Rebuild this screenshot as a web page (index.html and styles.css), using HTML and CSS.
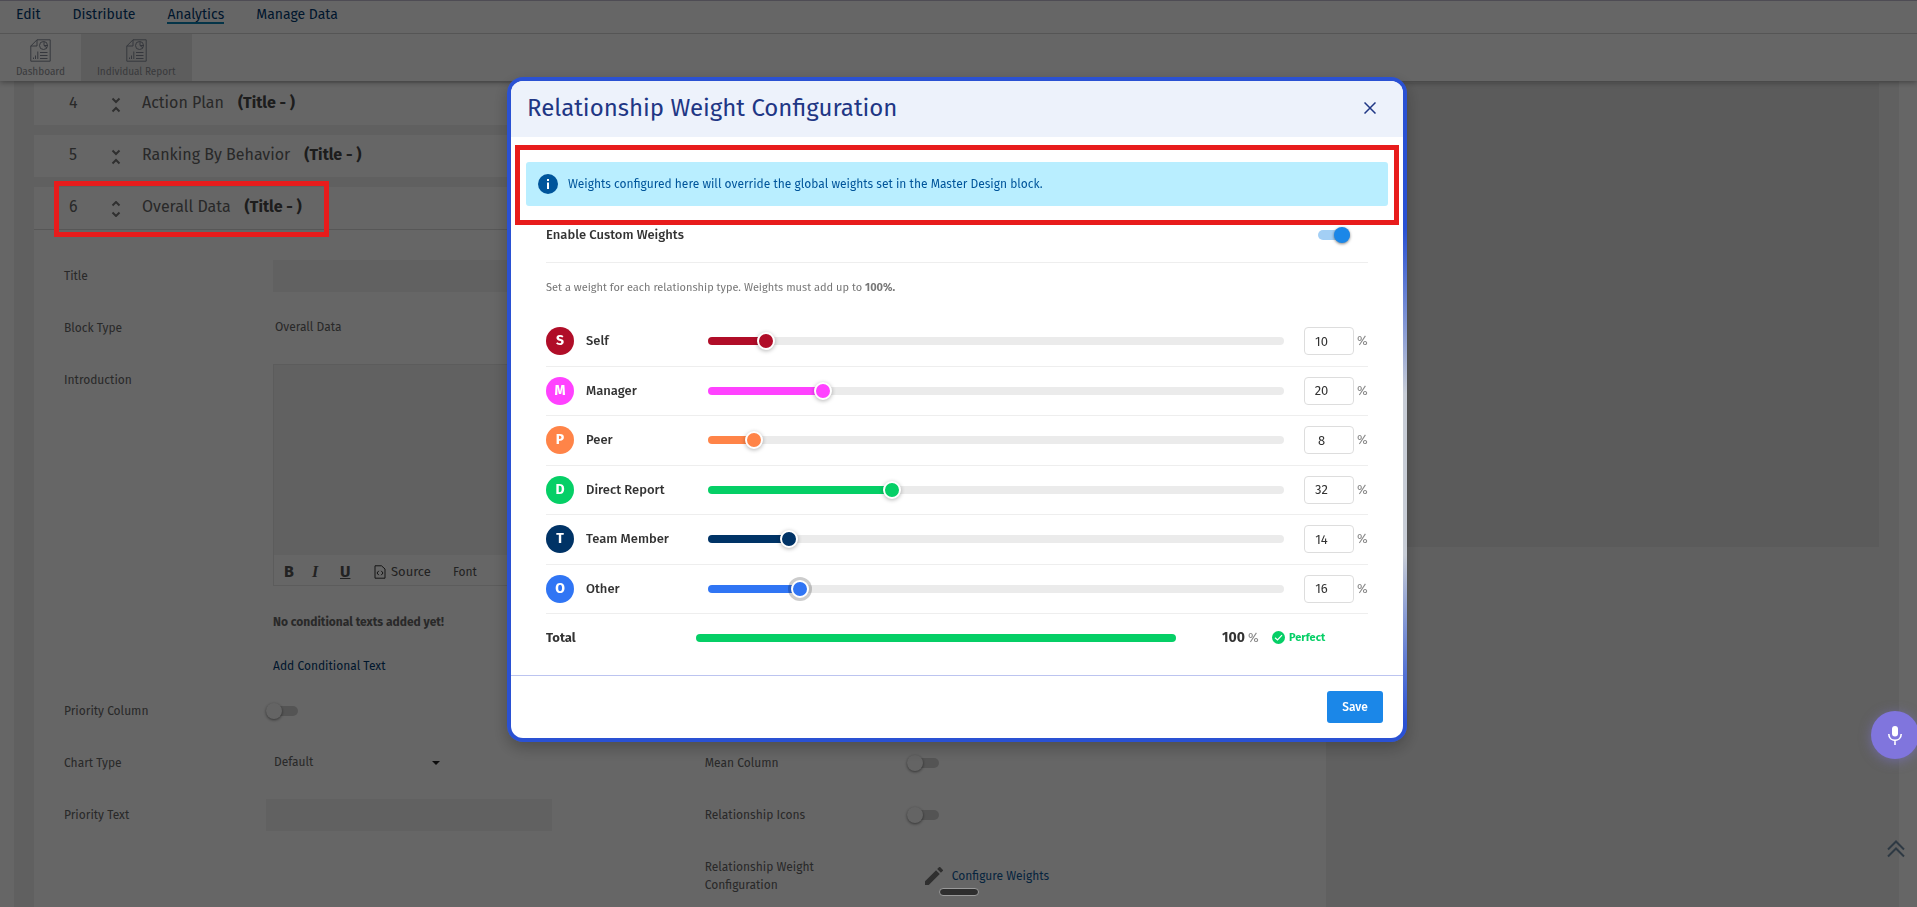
FILE: index.html
```html
<!DOCTYPE html>
<html lang="en">
<head>
  <meta charset="UTF-8" />
  <meta name="viewport" content="width=device-width, initial-scale=1.0">
  <title>Individual Report</title>
  <link rel="stylesheet" href="styles.css">
</head>
<body>
  <svg class="sprite" aria-hidden="true">
    <symbol id="icon-report" viewBox="0 0 21 23">
      <path d="M7 .8H20.2V22.2H.8V7Z M7 .8V7H.8" />
      <circle cx="13.5" cy="6.5" r="4" />
      <path d="M14 2.5V6.5H18 M14 6.5L17 9" />
      <path d="M10 13.5H17.5 M10 16.5H17.5 M10 19.5H17.5" />
      <path d="M3.5 20V18.5 M5.5 20V16.5 M7.8 20V12.5" />
    </symbol>
    <symbol id="icon-collapsed" viewBox="0 0 10 16">
      <path d="M1.5 1.5L5 5L8.500 1.5 M1.5 14.500L5 11L8.500 14.500" />
    </symbol>
    <symbol id="icon-expanded" viewBox="0 0 10 16">
      <path d="M1.5 4.500L5 1L8.500 4.500 M1.5 11.500L5 15L8.500 11.500" />
    </symbol>
  </svg>

  <div class="page">
    <header class="header">
      <nav class="nav">
        <a href="#">Edit</a>
        <a href="#">Distribute</a>
        <a href="#" class="active">Analytics</a>
        <a href="#">Manage Data</a>
      </nav>
      <div class="toolbar">
        <a href="#" class="tool">
          <svg class="tool-icon"><use href="#icon-report" /></svg>
          Dashboard
        </a>
        <a href="#" class="tool selected">
          <svg class="tool-icon"><use href="#icon-report" /></svg>
          Individual Report
        </a>
      </div>
    </header>

    <main class="workspace">
      <div class="report">
        <section class="block">
          <h2 class="block-head">
            <span class="block-number">4</span>
            <svg class="block-arrow"><use href="#icon-collapsed" /></svg>
            <span>Action Plan</span>
            <b>(Title - )</b>
          </h2>
        </section>
        <section class="block">
          <h2 class="block-head">
            <span class="block-number">5</span>
            <svg class="block-arrow"><use href="#icon-collapsed" /></svg>
            <span>Ranking By Behavior</span>
            <b>(Title - )</b>
          </h2>
        </section>
        <section class="block">
          <h2 class="block-head">
            <span class="block-number">6</span>
            <svg class="block-arrow"><use href="#icon-expanded" /></svg>
            <span>Overall Data</span>
            <b>(Title - )</b>
          </h2>
          <form class="form">
            <div class="field">
              <label for="title">Title</label>
              <input class="text-input" id="title" type="text">
            </div>
            <div class="field">
              <span class="label">Block Type</span>
              <span class="value">Overall Data</span>
            </div>
            <div class="field">
              <label for="intro">Introduction</label>
              <div class="intro">
                <div class="editor">
                  <textarea id="intro"></textarea>
                  <div class="editor-bar">
                    <button type="button" class="bold">B</button>
                    <button type="button" class="italic">I</button>
                    <button type="button" class="underline">U</button>
                    <button type="button" class="source">
                      <svg width="12" height="14" viewBox="0 0 12 14"><path d="M1 .8H7.500L11 4V13.200H1Z M4.800 5.800L3 8L4.800 10.200 M7.200 5.800L9 8L7.200 10.200" /></svg>
                      Source
                    </button>
                    <button type="button" class="font">Font</button>
                  </div>
                </div>
                <p class="empty">No conditional texts added yet!</p>
                <a href="#" class="add">Add Conditional Text</a>
              </div>
            </div>
            <div class="columns">
              <div class="column">
                <div class="field">
                  <label for="priority-column">Priority Column</label>
                  <input class="switch" id="priority-column" type="checkbox">
                </div>
                <div class="field">
                  <label for="chart-type">Chart Type</label>
                  <div class="select">
                    <select id="chart-type"><option>Default</option></select>
                  </div>
                </div>
                <div class="field">
                  <label for="priority-text">Priority Text</label>
                  <input class="text-input" id="priority-text" type="text">
                </div>
              </div>
              <div class="column column-end">
                <div class="field">
                  <label for="mean-column">Mean Column</label>
                  <input class="switch" id="mean-column" type="checkbox">
                </div>
                <div class="field">
                  <label for="relationship-icons">Relationship Icons</label>
                  <input class="switch" id="relationship-icons" type="checkbox">
                </div>
                <div class="field">
                  <span class="label">Relationship Weight Configuration</span>
                  <a href="#" class="configure">
                    <svg width="18" height="18" viewBox="3 3 18 18"><path d="M3 17.250V21h3.750L17.810 9.940l-3.750-3.750L3 17.250zM20.710 7.040a1 1 0 0 0 0-1.410l-2.340-2.340a1 1 0 0 0-1.410 0l-1.830 1.830 3.750 3.750 1.830-1.830z" /></svg>
                    Configure Weights
                  </a>
                </div>
              </div>
            </div>
          </form>
        </section>
      </div>
      <aside class="side"></aside>
    </main>

    <a href="#" class="to-top" aria-label="Back to top">
      <svg width="18" height="18" viewBox="0 0 18 18"><path d="M1 9.500L9 1.500L17 9.500 M1 16.500L9 8.500L17 16.500" /></svg>
    </a>
  </div>

  <div class="overlay">
    <div class="modal" role="dialog" aria-labelledby="modal-title">
      <div class="modal-head">
        <h1 id="modal-title">Relationship Weight Configuration</h1>
        <button type="button" class="close" aria-label="Close">
          <svg width="12" height="12" viewBox="0 0 12 12"><path d="M.5 .5L11.500 11.500M11.500 .5L.5 11.500" /></svg>
        </button>
      </div>
      <div class="modal-body">
        <div class="notice">
          <svg width="20" height="20" viewBox="0 0 20 20"><circle cx="10" cy="10" r="10" fill="#00559b" /><path d="M9 8.500h2V15H9zM9 5h2v2H9z" fill="#fff" /></svg>
          Weights configured here will override the global weights set in the Master Design block.
        </div>
        <div class="weights">
          <div class="enable">
            <label for="enable-weights">Enable Custom Weights</label>
            <input class="switch" id="enable-weights" type="checkbox" checked>
          </div>
          <p class="hint">Set a weight for each relationship type. Weights must add up to <b>100%.</b></p>
          <div class="rows" id="rows"></div>
          <div class="total">
            <span>Total</span>
            <div class="total-bar"></div>
            <output class="total-value" id="total"></output>
            <span class="percent">%</span>
            <span class="status">
              <svg width="13" height="13" viewBox="0 0 13 13"><circle cx="6.500" cy="6.500" r="6.500" fill="#05cf66" /><path d="M3 6.800L5.500 9L10 4.200" fill="none" stroke="#fff" stroke-width="1.200" /></svg>
              Perfect
            </span>
          </div>
        </div>
      </div>
      <div class="modal-foot">
        <button type="button" class="save">Save</button>
      </div>
      <div class="mark mark-notice"></div>
    </div>
  </div>

  <div class="mark mark-block"></div>
  <button type="button" class="mic" aria-label="Voice input">
    <svg width="14" height="19" viewBox="0 0 14 19"><rect x="4" y="0" width="6" height="10.500" rx="3" fill="#fff" /><path d="M.8 8C.8 16.500 13.200 16.500 13.200 8M7 14.500V19" fill="none" stroke="#fff" stroke-width="1.600" /></svg>
  </button>
  <div class="handle"></div>

  <script src="script.js"></script>
</body>
</html>
```
FILE: script.js
```js
const weights = [
  { name: "Self", color: "#b00d28", value: 10 },
  { name: "Manager", color: "#ff42ff", value: 20 },
  { name: "Peer", color: "#ff8448", value: 8 },
  { name: "Direct Report", color: "#05cf66", value: 32 },
  { name: "Team Member", color: "#003366", value: 14 },
  { name: "Other", color: "#3075f4", value: 16, focused: true }
];

const rows = document.getElementById("rows");

function updateTotal() {
  const sum = weights.reduce((total, w) => total + w.value, 0);
  document.getElementById("total").textContent = sum;
}

weights.forEach((w, i) => {
  const row = document.createElement("div");
  row.className = "row" + (w.focused ? " focused" : "");
  row.style.setProperty("--color", w.color);
  row.style.setProperty("--value", w.value + "%");
  row.innerHTML = `
    <span class="avatar">${w.name[0]}</span>
    <label for="weight${i}">${w.name}</label>
    <div class="slider"><input type="range" min="0" max="100" value="${w.value}" aria-label="${w.name}"></div>
    <input class="number" id="weight${i}" type="number" min="0" max="100" value="${w.value}">
    <span class="percent">%</span>`;
  rows.appendChild(row);

  // Keep the slider and the number box in step
  const inputs = row.querySelectorAll("input");
  inputs.forEach((input) => {
    input.addEventListener("input", () => {
      w.value = Number(input.value);
      inputs.forEach((other) => { other.value = w.value; });
      row.style.setProperty("--value", w.value + "%");
      updateTotal();
    });
  });
});

updateTotal();
```
FILE: styles.css
```css
* {
  box-sizing: border-box;
}
body {
  margin: 0;
  font-family: "Fira Sans", Roboto, sans-serif;
  font-size: 12px;
  line-height: 18px;
  color: #666;
  background: #fff;
}
h1, h2, p {
  margin: 0;
  font-weight: normal;
}
a {
  color: #003a70;
  text-decoration: none;
}
button, input, select, textarea {
  font: inherit;
  color: inherit;
  margin: 0;
}
button {
  border: none;
  background: none;
  padding: 0;
  cursor: pointer;
}
.sprite {
  display: none;
}
.page {
  height: 100vh;
  overflow: hidden;
}

/* Header */
.header {
  position: relative;
  background: #fff;
  border-top: 1px solid #c3bed2;
  box-shadow: 0 1px 6px rgba(0, 0, 0, 0.4);
}
.nav {
  display: flex;
  gap: 32px;
  padding: 5px 16px 9px;
  border-bottom: 1px solid #d5d5d5;
}
.nav a {
  font-size: 14px;
}
.nav .active {
  box-shadow: inset 0 -2px #0a82b4;
}
.toolbar {
  display: flex;
}
.tool {
  display: flex;
  flex-direction: column;
  align-items: center;
  gap: 1px;
  height: 47px;
  padding: 5px 16px 0;
  font-size: 10px;
  color: #8f9196;
}
.tool.selected {
  background: #e9e9e9;
}
.tool-icon {
  width: 21px;
  height: 23px;
  fill: none;
  stroke: #858b98;
}

/* Report blocks */
.workspace {
  display: flex;
  align-items: flex-start;
  margin: 0 18px 0 14px;
  padding: 2px 20px 0;
  background: #f0f0f0;
}
.report {
  flex: 7;
  display: flex;
  flex-direction: column;
  gap: 10px;
}
.side {
  flex: 3;
  height: 464px;
  background: #e3e3e3;
}
.block {
  background: #fff;
}
.block-head {
  display: flex;
  align-items: center;
  height: 42px;
  padding: 0 35px 2px;
  font-size: 16px;
}
.block-head b {
  margin-left: 14px;
  color: #4a4a4a;
}
.block-number {
  width: 42px;
}
.block-arrow {
  width: 10px;
  height: 16px;
  margin-top: 4px;
  margin-right: 21px;
  fill: none;
  stroke: #777;
  stroke-width: 2;
}
.form {
  padding: 30px 0 40px 30px;
  border-top: 1px solid #dadada;
}
.field {
  display: flex;
  min-height: 32px;
  margin-bottom: 20px;
}
.field label,
.label {
  flex: none;
  width: 209px;
  padding: 7px 60px 7px 0;
}
.value {
  padding: 6px 2px;
}
.text-input {
  flex: 1;
  height: 32px;
  border: none;
  background: #f3f3f3;
}
.intro {
  flex: 1;
}
.editor {
  border: 1px solid #e6e6e6;
}
.editor textarea {
  display: block;
  width: 100%;
  height: 190px;
  border: none;
  resize: none;
  background: #f3f3f3;
}
.editor-bar {
  display: flex;
  align-items: center;
  height: 30px;
  padding: 4px 10px 0;
  color: #555;
}
.editor-bar button {
  width: 28px;
  text-align: left;
}
.editor-bar .bold,
.editor-bar .underline {
  font-size: 16px;
  font-weight: bold;
}
.editor-bar .italic {
  font: italic bold 16px "Liberation Serif", serif;
}
.editor-bar .underline {
  width: 34px;
  text-decoration: underline;
}
.editor-bar .source {
  display: flex;
  align-items: center;
  gap: 5px;
  width: 79px;
  font-size: 13px;
}
.source svg {
  fill: none;
  stroke: #333;
}
.empty {
  margin-top: 27px;
  font-weight: bold;
}
.add {
  display: block;
  margin-top: 26px;
}
.columns {
  display: grid;
  grid-template-columns: 1fr 1fr;
  gap: 20px;
}
.columns label,
.columns .label {
  width: 202px;
}
.columns .text-input {
  flex: none;
  width: 286px;
}
.column-end {
  padding-top: 52px;
}
.select {
  position: relative;
  width: 178px;
}
.select select {
  width: 100%;
  height: 30px;
  padding: 0 8px;
  border: none;
  appearance: none;
  background: none;
}
.select::after {
  content: "";
  position: absolute;
  right: 4px;
  top: 14px;
  border: 4px solid transparent;
  border-top-color: #222;
}
.configure {
  display: flex;
  align-items: center;
  gap: 9px;
  margin-left: 18px;
  color: #0f5a9c;
}
.configure svg {
  fill: #777;
}
.to-top {
  position: fixed;
  right: 12px;
  bottom: 44px;
}
.to-top svg {
  fill: none;
  stroke: #7390a8;
  stroke-width: 2;
}

/* Switch */
.switch {
  appearance: none;
  flex: none;
  display: flex;
  align-items: center;
  align-self: center;
  width: 32px;
  height: 10px;
  border-radius: 5px;
  background: #d3d3d3;
}
.switch::before {
  content: "";
  width: 16px;
  height: 16px;
  border-radius: 50%;
  background: #fafafa;
  box-shadow: 0 1px 3px rgba(0, 0, 0, 0.5);
}
.switch:checked {
  justify-content: flex-end;
  background: #a3cff5;
}
.switch:checked::before {
  background: #1b87e8;
}

/* Modal */
.overlay {
  position: fixed;
  inset: 0;
  display: flex;
  align-items: flex-start;
  justify-content: center;
  padding: 77px 3px 0 0;
  background: rgba(0, 0, 0, 0.6);
}
.modal {
  position: relative;
  width: 900px;
  max-width: 100%;
  border: 4px solid transparent;
  border-radius: 16px;
  background:
    linear-gradient(#fff, #fff) padding-box,
    conic-gradient(#2a51d3 68deg, #c8cdd6 88deg, #c8cdd6 108deg, #2a51d3 125deg) border-box;
  box-shadow: 0 6px 16px rgba(0, 0, 0, 0.25);
  color: #333;
}
.modal-head {
  display: flex;
  align-items: center;
  justify-content: space-between;
  height: 56px;
  padding: 0 27px 2px 16px;
  border-radius: 12px 12px 0 0;
  background: #edf2fb;
  color: #1f3785;
}
.modal-head h1 {
  font-size: 24px;
  line-height: 30px;
}
.close {
  display: flex;
}
.close svg {
  fill: none;
  stroke: #1f3785;
  stroke-width: 1.5;
}
.modal-body {
  padding: 25px 15px 14px;
}
.notice {
  display: flex;
  align-items: center;
  gap: 10px;
  height: 44px;
  padding: 0 12px;
  border-radius: 3px;
  background: #b9eeff;
  color: #00559b;
}
.weights {
  padding: 0 20px;
  font-size: 13px;
}
.enable {
  display: flex;
  align-items: center;
  justify-content: space-between;
  height: 57px;
  padding: 2px 18px 0 0;
  border-bottom: 1px solid #eee;
  font-weight: 500;
}
.hint {
  padding: 16px 0 20px;
  font-size: 11px;
  color: #777;
}
.rows {
  display: grid;
  grid-auto-rows: 1fr;
  height: 297px;
}
.row {
  display: flex;
  align-items: center;
  border-bottom: 1px solid #eee;
}
.row label {
  width: 134px;
  padding-left: 12px;
  font-weight: 500;
}
.avatar {
  width: 28px;
  border-radius: 50%;
  background: var(--color);
  color: #fff;
  font-size: 14px;
  font-weight: bold;
  line-height: 28px;
  text-align: center;
}
.slider {
  flex: 1;
  display: flex;
  align-items: center;
  height: 8px;
  margin-right: 20px;
  border-radius: 4px;
  background: linear-gradient(to right, var(--color) var(--value), #ebebeb var(--value));
}
.slider input {
  appearance: none;
  flex: 1;
  min-width: 0;
  height: 18px;
  margin: 0 -9px;
  background: none;
}
.slider input::-webkit-slider-thumb {
  appearance: none;
  width: 18px;
  height: 18px;
  border: 2px solid #fff;
  border-radius: 50%;
  background: var(--color);
  box-shadow: 0 1px 4px rgba(0, 0, 0, 0.3);
}
.focused input::-webkit-slider-thumb {
  box-shadow: 0 0 0 3px rgba(0, 0, 0, 0.2);
}
.number {
  width: 50px;
  height: 28px;
  padding: 0;
  border: 1px solid #ddd;
  border-radius: 4px;
  background: #fff;
  text-align: center;
}
.percent {
  width: 14px;
  padding-left: 3px;
  color: #888;
}
.total {
  display: flex;
  align-items: center;
  height: 47px;
  font-weight: bold;
}
.total > :first-child {
  width: 150px;
}
.total-bar {
  flex: 1;
  height: 8px;
  border-radius: 4px;
  background: #05cf66;
}
.total-value {
  width: 69px;
  font-size: 14px;
  text-align: right;
}
.total .percent {
  font-weight: normal;
}
.status {
  display: flex;
  align-items: center;
  gap: 4px;
  width: 109px;
  padding-left: 13px;
  font-size: 11px;
  color: #05cf66;
}
.modal-foot {
  display: flex;
  justify-content: flex-end;
  padding: 15px 20px;
  border-top: 1px solid #bcc4f0;
}
.save {
  width: 56px;
  height: 32px;
  border-radius: 3px;
  background: #1b87e8;
  color: #fff;
  font-weight: 500;
}

/* Things that float over the page */
.mark {
  position: absolute;
  border: 5px solid #e81c1c;
}
.mark-notice {
  top: 64px;
  left: 4px;
  right: 4px;
  height: 80px;
}
.mark-block {
  top: 181px;
  left: 54px;
  width: 275px;
  height: 56px;
}
.mic {
  position: fixed;
  right: -2px;
  bottom: 148px;
  display: flex;
  align-items: center;
  justify-content: center;
  width: 48px;
  height: 48px;
  border-radius: 50%;
  background: #8075dd;
  box-shadow: 0 2px 12px rgba(128, 117, 221, 0.5);
}
.handle {
  position: fixed;
  left: 50%;
  bottom: 11px;
  width: 40px;
  height: 8px;
  margin-left: -20px;
  border: 1px solid #999;
  border-radius: 4px;
  background: #2e2e2e;
}
```
